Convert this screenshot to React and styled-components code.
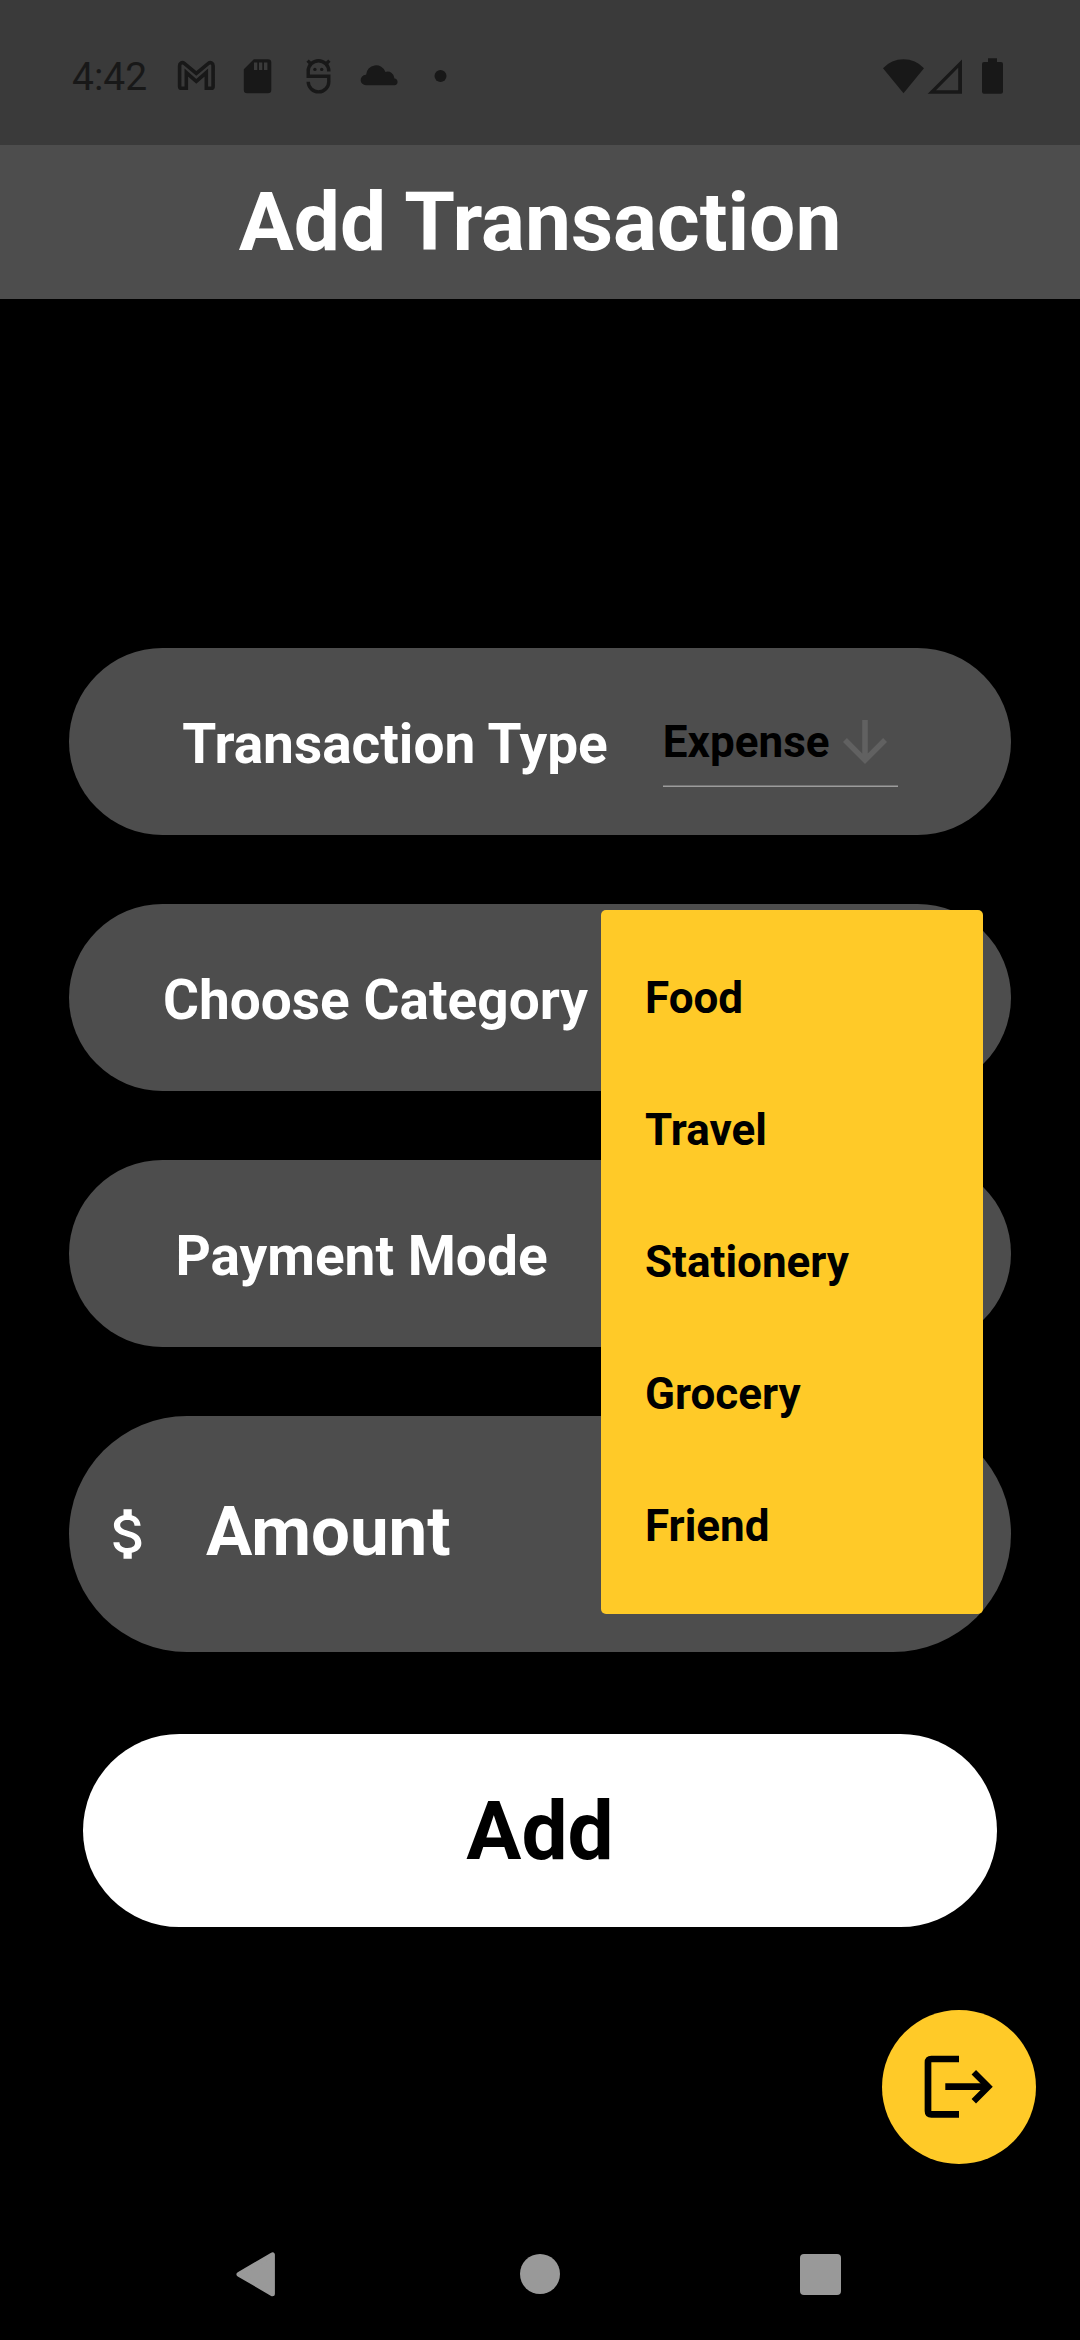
import React, { useState } from "react";
import styled, { createGlobalStyle } from "styled-components";

const GlobalStyle = createGlobalStyle`
  *, *::before, *::after { box-sizing: border-box; }
  body { margin: 0; background: #000; font-family: Roboto, "Liberation Sans", sans-serif; }
  button, input, select { font: inherit; border: 0; padding: 0; margin: 0; background: none; }
`;

const Page = styled.div`
  display: flex;
  flex-direction: column;
  min-height: 100vh;
  background: #000;
  color: #fff;
`;

const StatusBar = styled.div`
  display: flex;
  align-items: center;
  justify-content: space-between;
  height: 145px;
  padding: 8px 66px 0 72px;
  background: #3a3a3a;
  color: #181818;
`;

const StatusGroup = styled.div`
  display: flex;
  align-items: center;
  gap: ${({ $gap = 0 }) => $gap}px;
`;

const Clock = styled.time`
  font-size: 39px;
  line-height: 48px;
`;

const StatusIcon = styled.svg`
  display: block;
  width: ${({ $width }) => $width}px;
  height: 48px;
  fill: currentColor;
`;

const Header = styled.header`
  display: flex;
  align-items: center;
  justify-content: center;
  height: 154px;
  background: #4d4d4d;
`;

const Title = styled.h1`
  margin: 0;
  font-size: 82px;
  font-weight: 700;
  line-height: 98px;
`;

const Form = styled.form`
  display: flex;
  flex-direction: column;
  gap: 69px;
  padding: 349px 69px 0;
`;

const FieldRow = styled.div`
  display: flex;
  align-items: center;
  justify-content: center;
  gap: 55px;
  height: 187px;
  border-radius: 94px;
  background: #4d4d4d;
`;

const FieldLabel = styled.label`
  padding-top: 4px;
  font-size: 55px;
  font-weight: 700;
  line-height: 66px;
  white-space: nowrap;
`;

const Dropdown = styled.div`
  position: relative;
  display: grid;
  align-items: center;
  width: ${({ $width }) => $width}px;
  height: 91px;
  box-shadow: inset 0 -1px #9c9c9c, inset 0 -2px #757575;

  > * { grid-area: 1 / 1; }
`;

const Select = styled.select`
  appearance: none;
  width: 100%;
  height: 100%;
  color: #000;
  font-size: 44px;
  font-weight: 700;
  cursor: pointer;
`;

const MenuTrigger = styled.button`
  width: 100%;
  height: 100%;
  cursor: pointer;
`;

const ArrowIcon = styled.svg`
  justify-self: end;
  width: 66px;
  height: 66px;
  fill: #616161;
  pointer-events: none;
`;

const Menu = styled.ul`
  position: absolute;
  top: -42px;
  right: -66px;
  z-index: 2;
  width: 382px;
  margin: 0;
  padding: 22px 0;
  list-style: none;
  border-radius: 5px;
  background: #ffca28;
`;

const MenuItem = styled.button`
  display: block;
  width: 100%;
  height: 132px;
  padding: 0 44px;
  color: #000;
  font-size: 44px;
  font-weight: 700;
  text-align: left;
  cursor: pointer;
`;

const AmountRow = styled.div`
  display: flex;
  align-items: center;
  gap: 44px;
  height: 236px;
  padding: 0 27px;
  border-radius: 118px;
  background: #4d4d4d;
`;

const MoneyIcon = styled.svg`
  flex: none;
  width: 66px;
  height: 66px;
  fill: #fff;
`;

const AmountInput = styled.input`
  flex: 1;
  min-width: 0;
  height: 100%;
  padding-bottom: 6px;
  color: #fff;
  font-size: 69px;
  font-weight: 700;
  outline: none;

  &::placeholder { color: #fff; opacity: 1; }
`;

const SubmitButton = styled.button`
  height: 193px;
  margin: 13px 14px 0;
  border-radius: 97px;
  background: #fff;
  color: #000;
  font-size: 82px;
  font-weight: 700;
  cursor: pointer;
`;

const Actions = styled.div`
  display: flex;
  justify-content: flex-end;
  margin-top: auto;
  padding: 44px;
`;

const FloatingButton = styled.button`
  display: grid;
  place-items: center;
  width: 154px;
  height: 154px;
  border-radius: 50%;
  background: #ffca28;
  cursor: pointer;
`;

const LogoutIcon = styled.svg`
  width: 82px;
  height: 82px;
  fill: none;
  stroke: #000;
`;

const NavBar = styled.nav`
  display: flex;
  justify-content: center;
  height: 132px;
`;

const NavButton = styled.button`
  display: grid;
  place-items: center;
  width: 280px;
  height: 100%;
`;

const NavIcon = styled.svg`
  width: 48px;
  height: 48px;
  fill: #999;
  stroke: #999;
  stroke-linejoin: round;
`;

const categories = ["Food", "Travel", "Stationery", "Grocery", "Friend"];

const DownArrow = () => (
  <ArrowIcon viewBox="0 0 24 24" aria-hidden="true">
    <path d="M20 12l-1.41-1.41L13 16.17V4h-2v12.17l-5.58-5.59L4 12l8 8 8-8z" />
  </ArrowIcon>
);

const NotificationIcons = () => (
  <StatusGroup>
    <StatusIcon $width={61} viewBox="0 0 61 48" aria-hidden="true">
      <path
        d="M15.5 35.3H20.3V19.6L30.3 28.4L40.3 19.6V35.3H45.2Q47.1 35.3 47.1 33.4V12.8C47.1 9.9 44.3 8.9 42.4 10.4L30.3 20.3L18.3 10.4C16.4 8.9 13.6 9.9 13.6 12.8V33.4Q13.6 35.3 15.5 35.3Z"
        fill="none"
        stroke="currentColor"
        strokeWidth="3.6"
      />
    </StatusIcon>
    <StatusIcon $width={61} viewBox="0 0 61 48" aria-hidden="true">
      <path
        fillRule="evenodd"
        d="M26.8 6.2H41a3.3 3.3 0 0 1 3.3 3.3V37a3.3 3.3 0 0 1-3.3 3.3H20.1a3.3 3.3 0 0 1-3.3-3.3V16.3ZM27 9.4V17H30.3V9.4ZM32 9.4V17H35.3V9.4ZM37 9.4V17H40.4V9.4Z"
      />
    </StatusIcon>
    <StatusIcon $width={61} viewBox="0 0 61 48" aria-hidden="true">
      <path
        d="M40.8 18.6V18A10.3 10.3 0 0 0 20.2 18V23.3H40.8V28.4A10.3 10.3 0 0 1 20.2 28.7"
        fill="none"
        stroke="currentColor"
        strokeWidth="3.4"
      />
      <path d="M19.6 7.6L23 11M41.4 7.6L38 11" stroke="currentColor" strokeWidth="3.2" />
      <circle cx="26.9" cy="16.4" r="1.7" />
      <circle cx="33.7" cy="16.4" r="1.7" />
    </StatusIcon>
    <StatusIcon $width={61} viewBox="0 0 61 48" aria-hidden="true">
      <path d="M17 32.2a5.2 5.2 0 0 1-.3-10.4h.4a10 10 0 0 1 19.4-2.9 7 7 0 0 1 9 6.6 3.4 3.4 0 0 1 .4 6.7Z" />
    </StatusIcon>
    <StatusIcon $width={61} viewBox="0 0 61 48" aria-hidden="true">
      <circle cx="30.5" cy="23" r="6" />
    </StatusIcon>
  </StatusGroup>
);

const DeviceIcons = () => (
  <StatusGroup>
    <StatusIcon $width={46} viewBox="0 0 46 48" aria-hidden="true">
      <path d="M3 15.2A27.8 27.8 0 0 1 44 15.2L23.5 40.3Z" />
    </StatusIcon>
    <StatusIcon $width={44} viewBox="0 0 44 48" aria-hidden="true">
      <path fillRule="evenodd" d="M1.7 40.8H36V6.5ZM10 37.3H32.2V14.7Z" />
    </StatusIcon>
    <StatusIcon $width={44} viewBox="0 0 44 48" aria-hidden="true">
      <path d="M18 5.2H27V9H31a2 2 0 0 1 2 2V38.8a2 2 0 0 1-2 2H14a2 2 0 0 1-2-2V11a2 2 0 0 1 2-2H18Z" />
    </StatusIcon>
  </StatusGroup>
);

export default function App() {
  const [menuOpen, setMenuOpen] = useState(true);

  return (
    <Page>
      <GlobalStyle />
      <StatusBar>
        <StatusGroup $gap={19}>
          <Clock>4:42</Clock>
          <NotificationIcons />
        </StatusGroup>
        <DeviceIcons />
      </StatusBar>

      <Header>
        <Title>Add Transaction</Title>
      </Header>

      <Form onSubmit={(event) => event.preventDefault()}>
        <FieldRow>
          <FieldLabel htmlFor="type">Transaction Type</FieldLabel>
          <Dropdown $width={235}>
            <Select id="type" defaultValue="Expense">
              <option>Expense</option>
              <option>Income</option>
            </Select>
            <DownArrow />
          </Dropdown>
        </FieldRow>

        <FieldRow>
          <FieldLabel htmlFor="category">Choose Category</FieldLabel>
          <Dropdown $width={274}>
            <MenuTrigger
              id="category"
              type="button"
              aria-haspopup="true"
              aria-expanded={menuOpen}
              onClick={() => setMenuOpen(!menuOpen)}
            />
            <DownArrow />
            {menuOpen && (
              <Menu>
                {categories.map((name) => (
                  <li key={name}>
                    <MenuItem type="button" onClick={() => setMenuOpen(false)}>
                      {name}
                    </MenuItem>
                  </li>
                ))}
              </Menu>
            )}
          </Dropdown>
        </FieldRow>

        <FieldRow>
          <FieldLabel htmlFor="mode">Payment Mode</FieldLabel>
          <Dropdown $width={302}>
            <Select id="mode" defaultValue="">
              <option value="" />
            </Select>
            <DownArrow />
          </Dropdown>
        </FieldRow>

        <AmountRow>
          <MoneyIcon viewBox="0 0 24 24" aria-hidden="true">
            <path d="M11.8 10.9c-2.27-.59-3-1.2-3-2.15 0-1.09 1.01-1.85 2.7-1.85 1.78 0 2.44.85 2.5 2.1h2.21c-.07-1.72-1.12-3.3-3.21-3.81V3h-3v2.16c-1.94.42-3.5 1.68-3.5 3.61 0 2.31 1.91 3.46 4.7 4.13 2.5.6 3 1.48 3 2.41 0 .69-.49 1.79-2.7 1.79-2.06 0-2.87-.92-2.98-2.1h-2.2c.12 2.19 1.76 3.42 3.68 3.83V21h3v-2.15c1.95-.37 3.5-1.5 3.5-3.55 0-2.84-2.43-3.81-4.7-4.4z" />
          </MoneyIcon>
          <AmountInput aria-label="Amount" placeholder="Amount" inputMode="decimal" />
        </AmountRow>

        <SubmitButton type="submit">Add</SubmitButton>
      </Form>

      <Actions>
        <FloatingButton type="button" aria-label="Log out">
          <LogoutIcon viewBox="0 0 82 82" aria-hidden="true">
            <path d="M41 13H13.4Q10 13 10 16.4V65Q10 68.4 13.4 68.4H41" strokeWidth="6.7" />
            <path d="M27.3 40.7H70" strokeWidth="6.7" />
            <path d="M55.8 26.2L70.3 40.7L55.8 55.2" strokeWidth="6.3" />
          </LogoutIcon>
        </FloatingButton>
      </Actions>

      <NavBar>
        <NavButton type="button" aria-label="Back">
          <NavIcon viewBox="0 0 48 48" aria-hidden="true">
            <path d="M3 24.3L36.4 4.8V43.8Z" strokeWidth="5" />
          </NavIcon>
        </NavButton>
        <NavButton type="button" aria-label="Home">
          <NavIcon viewBox="0 0 48 48" aria-hidden="true">
            <circle cx="24" cy="24" r="20" strokeWidth="0" />
          </NavIcon>
        </NavButton>
        <NavButton type="button" aria-label="Recent apps">
          <NavIcon viewBox="0 0 48 48" aria-hidden="true">
            <rect x="4" y="4" width="41" height="41" rx="4" strokeWidth="0" />
          </NavIcon>
        </NavButton>
      </NavBar>
    </Page>
  );
}
